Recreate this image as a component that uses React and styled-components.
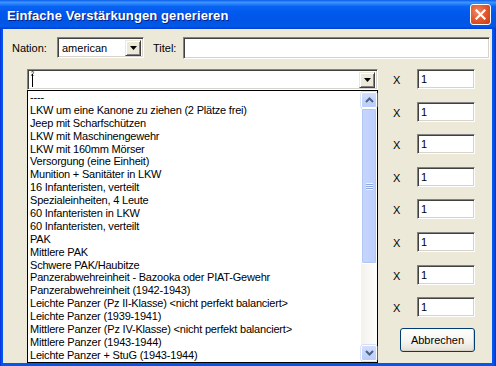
import React from 'react'
import styled, { createGlobalStyle } from 'styled-components'

const GlobalStyle = createGlobalStyle`
  html, body {
    margin: 0;
    padding: 0;
    background: #ffffff;
  }
  body {
    font-family: 'Liberation Sans', Arial, sans-serif;
    font-size: 11px;
    color: #000;
  }
`

const units = [
  '----',
  'LKW um eine Kanone zu ziehen (2 Plätze frei)',
  'Jeep mit Scharfschützen',
  'LKW mit Maschinengewehr',
  'LKW mit 160mm Mörser',
  'Versorgung (eine Einheit)',
  'Munition + Sanitäter in LKW',
  '16 Infanteristen, verteilt',
  'Spezialeinheiten, 4 Leute',
  '60 Infanteristen in LKW',
  '60 Infanteristen, verteilt',
  'PAK',
  'Mittlere PAK',
  'Schwere PAK/Haubitze',
  'Panzerabwehreinheit - Bazooka oder PIAT-Gewehr',
  'Panzerabwehreinheit (1942-1943)',
  'Leichte Panzer (Pz II-Klasse) <nicht perfekt balanciert>',
  'Leichte Panzer (1939-1941)',
  'Mittlere Panzer (Pz IV-Klasse) <nicht perfekt balanciert>',
  'Mittlere Panzer (1943-1944)',
  'Leichte Panzer  + StuG (1943-1944)',
]

const counts = [1, 1, 1, 1, 1, 1, 1, 1]

const DownTriangle = () => (
  <svg width="7" height="4" viewBox="0 0 7 4">
    <path d="M0 0h7L3.5 4z" fill="#000" />
  </svg>
)

const Chevron = ({ up }) => (
  <svg width="9" height="6" viewBox="0 0 9 6">
    <path
      d={up ? 'M1 5l3.5-3.5L8 5' : 'M1 1l3.5 3.5L8 1'}
      fill="none"
      stroke="#4d6185"
      strokeWidth="2"
    />
  </svg>
)

const App = () => {
  return (
    <>
      <GlobalStyle />
      <Window>
        <TitleBar>
          <Title>Einfache Verstärkungen generieren</Title>
          <CloseButton>
            <svg width="11" height="11" viewBox="0 0 11 11">
              <path d="M1.5 1.5l8 8M9.5 1.5l-8 8" stroke="#fff" strokeWidth="2.2" strokeLinecap="square" />
            </svg>
          </CloseButton>
        </TitleBar>

        <Body>
          <TopRow>
            <Label width={45}>Nation:</Label>
            <Select>
              <SelectText>american</SelectText>
              <ArrowButton>
                <DownTriangle />
              </ArrowButton>
            </Select>
            <Label width={30} gap={9}>Titel:</Label>
            <TextInput />
          </TopRow>

          <Main>
            <LeftColumn>
              <Combo>
                <ComboText>
                  <Sup>²</Sup>
                  <Caret />
                </ComboText>
                <ArrowButton>
                  <DownTriangle />
                </ArrowButton>
              </Combo>
              <DropList>
                <Items>
                  {units.map((u, i) => (
                    <Item key={i}>{u}</Item>
                  ))}
                </Items>
                <Scrollbar>
                  <ScrollButton>
                    <Chevron up />
                  </ScrollButton>
                  <Track>
                    <Thumb>
                      <Grip />
                    </Thumb>
                  </Track>
                  <ScrollButton>
                    <Chevron />
                  </ScrollButton>
                </Scrollbar>
              </DropList>
            </LeftColumn>

            <RightColumn>
              {counts.map((c, i) => (
                <CountRow key={i}>
                  <Times>X</Times>
                  <CountInput>{c}</CountInput>
                </CountRow>
              ))}
              <CancelButton>Abbrechen</CancelButton>
            </RightColumn>
          </Main>
        </Body>
      </Window>
    </>
  )
}

export default App

const Window = styled.div`
  width: 496px;
  height: 366px;
  display: flex;
  flex-direction: column;
  background: linear-gradient(to right, #0831d9 0, #0058ee 2px, #0058ee 493px, #0831d9 100%);
  overflow: hidden;
`

const TitleBar = styled.div`
  height: 29px;
  flex: none;
  display: flex;
  align-items: center;
  justify-content: space-between;
  padding: 0 5px 0 7px;
  background: linear-gradient(
    to bottom,
    #0a5ce8 0%,
    #3d95ff 8%,
    #0a64f2 22%,
    #0058ee 45%,
    #0055e5 75%,
    #005ae9 90%,
    #003dd7 100%
  );
`

const Title = styled.div`
  color: #fff;
  font-family: 'Liberation Sans', Arial, sans-serif;
  font-weight: bold;
  font-size: 13px;
  text-shadow: 1px 1px 0 #0a1e80;
  letter-spacing: 0.1px;
  padding-top: 1px;
`

const CloseButton = styled.div`
  width: 21px;
  height: 21px;
  box-sizing: border-box;
  border: 1px solid #fff;
  border-radius: 3px;
  display: flex;
  align-items: center;
  justify-content: center;
  background: radial-gradient(circle at 35% 35%, #f08a6a 0%, #e25b2f 45%, #c83a12 100%);
`

const Body = styled.div`
  flex: 1;
  min-height: 0;
  margin: 0 4px 3px 3px;
  background: #ece9d8;
  padding: 8px 2px 0 9px;
  display: flex;
  flex-direction: column;
`

const TopRow = styled.div`
  display: flex;
  align-items: center;
  height: 21px;
`

const Label = styled.span`
  width: ${p => p.width}px;
  margin-left: ${p => p.gap || 0}px;
  flex: none;
`

const sunken = `
  box-sizing: border-box;
  border: 1px solid;
  border-color: #848284 #fff #fff #848284;
  box-shadow: inset 1px 1px 0 #424142, inset -1px -1px 0 #d6d3ce;
  background: #fff;
`

const Select = styled.div`
  ${sunken}
  width: 87px;
  height: 21px;
  display: flex;
  align-items: center;
  padding: 2px;
`

const SelectText = styled.span`
  flex: 1;
  padding-left: 2px;
`

const ArrowButton = styled.div`
  width: 16px;
  height: 16px;
  box-sizing: border-box;
  flex: none;
  display: flex;
  align-items: center;
  justify-content: center;
  background: #ece9d8;
  border: 1px solid;
  border-color: #ece9d8 #424142 #424142 #ece9d8;
  box-shadow: inset 1px 1px 0 #fff, inset -1px -1px 0 #848284;
`

const TextInput = styled.div`
  ${sunken}
  flex: 1;
  height: 22px;
`

const Main = styled.div`
  flex: 1;
  min-height: 0;
  display: flex;
  margin-top: 11px;
`

const LeftColumn = styled.div`
  width: 351px;
  margin-left: 15px;
  display: flex;
  flex-direction: column;
`

const Combo = styled.div`
  ${sunken}
  height: 21px;
  display: flex;
  align-items: center;
  padding: 2px;
`

const ComboText = styled.div`
  flex: 1;
  position: relative;
  height: 100%;
`

const Sup = styled.span`
  position: absolute;
  left: 1px;
  top: -1px;
  font-size: 9px;
  line-height: 9px;
`

const Caret = styled.span`
  position: absolute;
  left: 2px;
  top: 2px;
  width: 1px;
  height: 13px;
  background: #000;
`

const DropList = styled.div`
  flex: 1;
  min-height: 0;
  display: flex;
  border: 1px solid #000;
  background: #fff;
`

const Items = styled.div`
  flex: 1;
  overflow: hidden;
  padding: 0 0 0 2px;
`

const Item = styled.div`
  height: 12.9px;
  line-height: 12.9px;
  white-space: nowrap;
  letter-spacing: -0.2px;
`

const Scrollbar = styled.div`
  width: 16px;
  flex: none;
  display: flex;
  flex-direction: column;
  padding: 1px 0;
  background: linear-gradient(to right, #f3f1ec, #fefefb);
`

const ScrollButton = styled.div`
  height: 16px;
  flex: none;
  box-sizing: border-box;
  border: 1px solid #fff;
  border-radius: 2px;
  display: flex;
  align-items: center;
  justify-content: center;
  background: linear-gradient(to bottom, #d2defd, #b8cdfa);
  box-shadow: 0 0 0 0.5px #b4c8f6;
`

const Track = styled.div`
  flex: 1;
  display: flex;
  flex-direction: column;
`

const Thumb = styled.div`
  height: 156px;
  box-sizing: border-box;
  border: 1px solid #fff;
  border-radius: 2px;
  background: linear-gradient(to right, #c6d6fd, #bccffb);
  box-shadow: inset 0 0 0 1px #b2c6f5;
  display: flex;
  align-items: center;
  justify-content: center;
`

const Grip = styled.div`
  width: 7px;
  height: 7px;
  background: repeating-linear-gradient(to bottom, #eef3fe 0, #eef3fe 1px, #8ca6e4 1px, #8ca6e4 2px);
`

const RightColumn = styled.div`
  display: flex;
  flex-direction: column;
  gap: 12.6px;
  margin-left: 15px;
`

const CountRow = styled.div`
  display: flex;
  align-items: center;
  height: 20px;
`

const Times = styled.span`
  width: 24px;
  flex: none;
  padding-top: 2px;
`

const CountInput = styled.div`
  ${sunken}
  width: 58px;
  height: 20px;
  padding: 2px 0 0 3px;
  line-height: 14px;
`

const CancelButton = styled.div`
  width: 75px;
  height: 24px;
  box-sizing: border-box;
  margin: -2px 0 0 7px;
  display: flex;
  align-items: center;
  justify-content: center;
  border: 1px solid #003c74;
  border-radius: 3px;
  background: linear-gradient(to bottom, #fff 0%, #f4f3ee 60%, #e2dfd4 100%);
  box-shadow: inset -1px -1px 0 #d6d0c5;
`
